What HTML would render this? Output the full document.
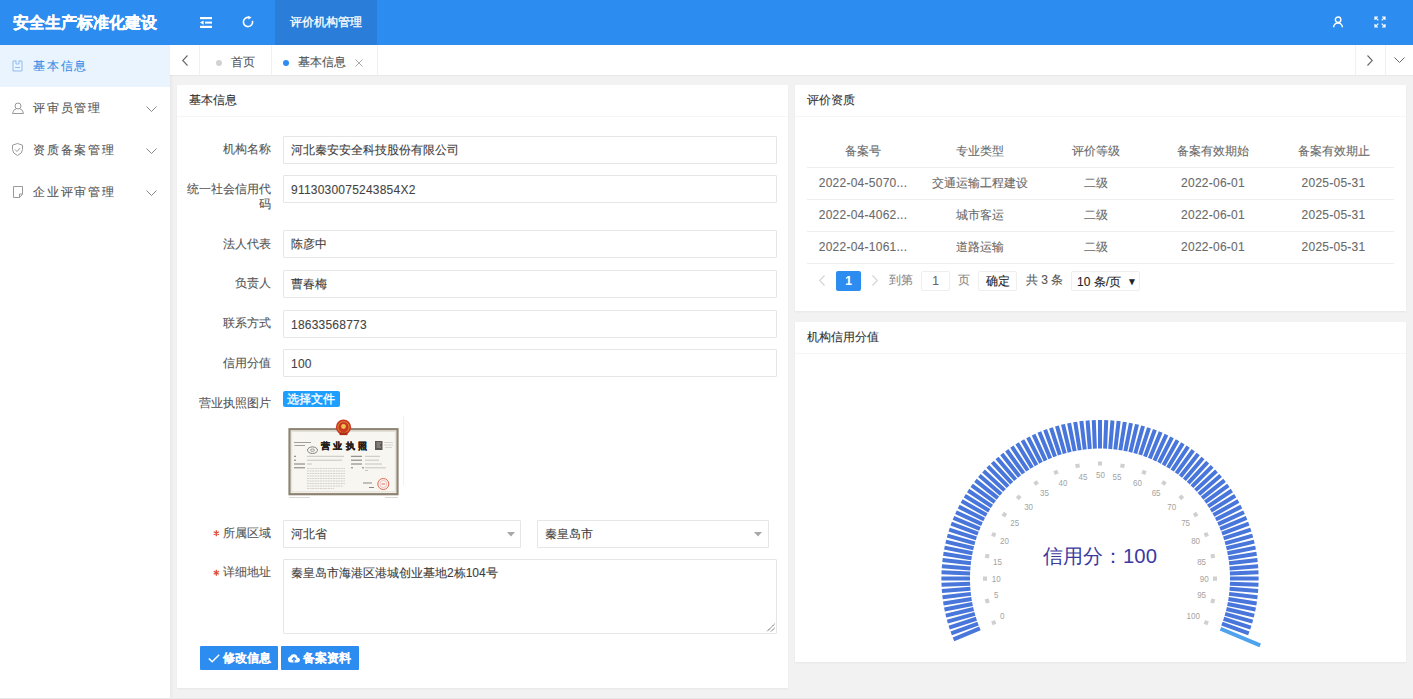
<!DOCTYPE html>
<html><head><meta charset="utf-8">
<style>
*{box-sizing:border-box;margin:0;padding:0}
html,body{width:1413px;height:699px;overflow:hidden;background:#f2f2f2;font-family:"Liberation Sans",sans-serif;font-size:12px;color:#333;-webkit-text-stroke-width:0.1px}
svg text{-webkit-text-stroke-width:0}
.abs{position:absolute}
#hd{left:0;top:0;width:1413px;height:45px;background:#2d8cf0}
#logo{left:13px;top:12px;-webkit-text-stroke:0.3px #fff;font-size:16px;font-weight:bold;color:#fff;line-height:22px;white-space:nowrap}
#navact{left:275px;top:0;width:102px;height:45px;background:#2a7dd8;color:#fff;line-height:44px;-webkit-text-stroke-width:0.3px;text-align:center;font-size:12px}
#side{left:0;top:45px;width:170px;height:653px;background:#fff}
.mi{position:absolute;left:0;width:170px;height:42px;line-height:42px;color:#555;font-size:12px;letter-spacing:1.8px}
.mi .t{position:absolute;left:33px;top:0}
.mi svg{position:absolute}
#tabs{left:170px;top:45px;width:1243px;height:30px;background:#fff;box-shadow:0 1px 1px rgba(0,0,0,.04)}
.sep{position:absolute;top:0;width:1px;height:30px;background:#f1f1f1}
.card{position:absolute;background:#fff;box-shadow:0 1px 2px rgba(0,0,0,.05)}
.ch{position:absolute;left:0;top:0;right:0;height:32px;border-bottom:1px solid #f6f6f6;line-height:30px;padding-left:12px;color:#333}
.lab{position:absolute;width:90px;text-align:right;color:#555;line-height:14px}
.btn{background:#2d8cf0;color:#fff;border-radius:1px;line-height:24px;font-weight:bold}
.td{position:absolute;width:116px;text-align:center;line-height:14px;color:#6a6a6a;white-space:nowrap}
.inp{position:absolute;border:1px solid #e6e6e6;border-radius:1px;background:#fff;line-height:26px;padding-left:7px;color:#3c3c3c}
</style></head><body>
<div id="hd" class="abs">
  <div id="logo" class="abs">安全生产标准化建设</div>
  <svg class="abs" style="left:200px;top:17px" width="13" height="11" viewBox="0 0 13 11">
    <rect x="0" y="0" width="12" height="2.2" fill="#fff"/>
    <rect x="5" y="4.6" width="7" height="2" fill="#fff"/>
    <rect x="0" y="8.8" width="12" height="2.2" fill="#fff"/>
    <path d="M0 5.6 L3.6 3.4 L3.6 7.8 Z" fill="#fff"/>
  </svg>
  <svg class="abs" style="left:242px;top:16px" width="13" height="13" viewBox="0 0 13 13">
    <path d="M10.44 4.81 A4.6 4.6 0 1 1 6.96 1.50" fill="none" stroke="#fff" stroke-width="1.6"/>
    <path d="M6.2 -0.3 L9.6 1.5 L6.4 3.6 Z" fill="#fff"/>
  </svg>
  <div id="navact" class="abs">评价机构管理</div>
  <svg class="abs" style="left:1332px;top:16px" width="12" height="12" viewBox="0 0 12 12">
    <path d="M1.6 11.3 A4.4 4.3 0 0 1 10.4 11.3" fill="none" stroke="#fff" stroke-width="1.5"/>
    <circle cx="6.1" cy="3.7" r="2.75" fill="#2d8cf0" stroke="#fff" stroke-width="1.4"/>
  </svg>
  <svg class="abs" style="left:1374px;top:16px" width="12" height="12" viewBox="0 0 12 12">
    <path d="M1 4 V1 H4 M1 1 L4.3 4.3 M8 1 H11 V4 M11 1 L7.7 4.3 M1 8 V11 H4 M1 11 L4.3 7.7 M8 11 H11 V8 M11 11 L7.7 7.7" fill="none" stroke="#fff" stroke-width="1.15"/>
  </svg>
</div>

<div id="side" class="abs">
  <div class="mi" style="top:0;background:#eaf4fe;color:#3a8ee6"><span class="t">基本信息</span>
    <svg style="left:12px;top:15px" width="11" height="12" viewBox="0 0 11 12"><path d="M1 1 H4 M7 1 H10 V11 H1 V1 M4 0.5 V4 H7 V0.5 M3 7.5 H8" fill="none" stroke="#8fbdf0" stroke-width="1"/></svg>
  </div>
  <div class="mi" style="top:42px"><span class="t">评审员管理</span>
    <svg style="left:12px;top:15px" width="12" height="12" viewBox="0 0 12 12"><circle cx="6" cy="4" r="3" fill="none" stroke="#999" stroke-width="1"/><path d="M0.5 11.5 Q1 7.5 4 6.8 M8 6.8 Q11 7.5 11.5 11.5 H0.5" fill="none" stroke="#999" stroke-width="1"/></svg>
    <svg style="left:146px;top:19px" width="11" height="6" viewBox="0 0 11 6"><path d="M0.5 0.5 L5.5 5.5 L10.5 0.5" fill="none" stroke="#888" stroke-width="1"/></svg>
  </div>
  <div class="mi" style="top:84px"><span class="t">资质备案管理</span>
    <svg style="left:12px;top:14px" width="11" height="13" viewBox="0 0 11 13"><path d="M5.5 0.5 L10.5 2.2 V6.5 Q10.5 10.5 5.5 12.5 Q0.5 10.5 0.5 6.5 V2.2 Z M3 6.5 L5 8.5 L8.2 5" fill="none" stroke="#999" stroke-width="1"/></svg>
    <svg style="left:146px;top:19px" width="11" height="6" viewBox="0 0 11 6"><path d="M0.5 0.5 L5.5 5.5 L10.5 0.5" fill="none" stroke="#888" stroke-width="1"/></svg>
  </div>
  <div class="mi" style="top:126px"><span class="t">企业评审管理</span>
    <svg style="left:13px;top:15px" width="10" height="12" viewBox="0 0 10 12"><path d="M0.5 0.5 H9.5 V8 L6.5 11.5 H0.5 Z M9.5 8 H6.5 V11.5" fill="none" stroke="#999" stroke-width="1"/></svg>
    <svg style="left:146px;top:19px" width="11" height="6" viewBox="0 0 11 6"><path d="M0.5 0.5 L5.5 5.5 L10.5 0.5" fill="none" stroke="#888" stroke-width="1"/></svg>
  </div>
</div>

<div class="abs" style="left:170px;top:45px;width:4px;height:653px;background:linear-gradient(to right,#e9e9e9,#f2f2f2)"></div>
<div id="tabs" class="abs">
  <div class="sep" style="left:29px"></div>
  <div class="sep" style="left:101px"></div>
  <div class="sep" style="left:207px"></div>
  <div class="sep" style="left:1185px"></div>
  <div class="sep" style="left:1215px"></div>
  <svg class="abs" style="left:12px;top:10px" width="6" height="11" viewBox="0 0 6 11"><path d="M5.5 0.5 L0.7 5.5 L5.5 10.5" fill="none" stroke="#666" stroke-width="1.1"/></svg>
  <div class="abs" style="left:46px;top:15px;width:6px;height:6px;border-radius:50%;background:#d2d2d2"></div>
  <div class="abs" style="left:61px;top:2px;line-height:30px;color:#555">首页</div>
  <div class="abs" style="left:113px;top:15px;width:6px;height:6px;border-radius:50%;background:#2d8cf0"></div>
  <div class="abs" style="left:128px;top:2px;line-height:30px;color:#555">基本信息</div>
  <svg class="abs" style="left:185px;top:14px" width="8" height="8" viewBox="0 0 8 8"><path d="M0.5 0.5 L7.5 7.5 M7.5 0.5 L0.5 7.5" stroke="#aaa" stroke-width="1"/></svg>
  <svg class="abs" style="left:1197px;top:10px" width="6" height="11" viewBox="0 0 6 11"><path d="M0.5 0.5 L5.3 5.5 L0.5 10.5" fill="none" stroke="#666" stroke-width="1.1"/></svg>
  <svg class="abs" style="left:1224px;top:12px" width="11" height="6" viewBox="0 0 11 6"><path d="M0.5 0.5 L5.5 5.5 L10.5 0.5" fill="none" stroke="#666" stroke-width="1"/></svg>
</div>

<!-- LEFT CARD -->
<div class="card" style="left:177px;top:85px;width:611px;height:603px">
  <div class="ch">基本信息</div>
</div>


<!-- FORM -->
<div class="lab" style="left:181px;top:142px">机构名称</div>
<div class="inp" style="left:283px;top:136px;width:494px;height:28px">河北秦安安全科技股份有限公司</div>
<div class="lab" style="left:181px;top:182px;line-height:14.5px">统一社会信用代<br>码</div>
<div class="inp" style="left:283px;top:175px;width:494px;height:28px"><span style="letter-spacing:.22px;color:#444;position:relative;top:1px">9113030075243854X2</span></div>
<div class="lab" style="left:181px;top:237px">法人代表</div>
<div class="inp" style="left:283px;top:230px;width:494px;height:28px">陈彦中</div>
<div class="lab" style="left:181px;top:276px">负责人</div>
<div class="inp" style="left:283px;top:270px;width:494px;height:28px">曹春梅</div>
<div class="lab" style="left:181px;top:316px">联系方式</div>
<div class="inp" style="left:283px;top:310px;width:494px;height:28px"><span style="letter-spacing:.22px;color:#444;position:relative;top:1px">18633568773</span></div>
<div class="lab" style="left:181px;top:356px">信用分值</div>
<div class="inp" style="left:283px;top:349px;width:494px;height:28px"><span style="letter-spacing:.22px;color:#444;position:relative;top:1px">100</span></div>
<div class="lab" style="left:181px;top:396px">营业执照图片</div>
<div class="abs" style="left:403px;top:416px;width:1px;height:69px;background:#f1f1f1"></div>
<div class="abs" style="left:283px;top:391px;width:57px;height:16px;background:#1e9fff;border-radius:2px;color:#fff;line-height:16px;text-align:center;text-indent:-2px;font-size:12px;-webkit-text-stroke-width:0.3px">选择文件</div>

<svg class="abs" style="left:284px;top:412px" width="122" height="90" viewBox="0 0 122 90">
  <rect x="5.5" y="17.2" width="108" height="65" fill="#f8f6f1" stroke="#8c8373" stroke-width="2.2"/>
  <rect x="7.8" y="19.5" width="103.4" height="60.4" fill="none" stroke="#d8d2c6" stroke-width="0.6"/>
  <circle cx="59.5" cy="15.2" r="7.6" fill="#c9381f"/>
  <circle cx="59.5" cy="15.2" r="5.6" fill="none" stroke="#e0a040" stroke-width="0.8"/>
  <circle cx="59.5" cy="14.5" r="2.4" fill="#f0c050"/>
  <rect x="55.5" y="20.5" width="8" height="2.6" fill="#b02a18"/>
  <g font-family="Liberation Sans, sans-serif" font-weight="bold" font-size="9" fill="#241c18" stroke="#241c18" stroke-width="0.35">
    <text x="36.8" y="37.3">营</text><text x="49.3" y="37.3">业</text><text x="61.8" y="37.3">执</text><text x="73.6" y="37.3">照</text>
  </g>
  <rect x="91" y="29" width="7.5" height="9" fill="#5d5853"/>
  <path d="M92.5 31 H97 M92.5 33 H96 M92.5 35 H97" stroke="#c8c3bc" stroke-width="0.7"/>
  <path d="M100 30.5 H109 M100 33 H109 M101 35.5 H108" stroke="#c5c0b8" stroke-width="0.6"/>
  <path d="M10 30.5 H27 M10.5 33.5 H21" stroke="#7d7873" stroke-width="0.7"/>
  <ellipse cx="28.5" cy="38.2" rx="5" ry="3.3" fill="none" stroke="#6a6560" stroke-width="0.8"/>
  <ellipse cx="28.5" cy="38.2" rx="2" ry="1.2" fill="none" stroke="#6a6560" stroke-width="0.6"/>
  <g stroke="#6f6a65" stroke-width="0.9">
    <path d="M10 44.3 H12 M10 48.2 H12 M10 52 H21 M10 55.8 H21"/>
    <path d="M67 44.3 H78 M67 48.2 H78 M67 52 H78 M67 55.8 H69 M78 55.8 H80"/>
  </g>
  <g stroke="#a9a49e" stroke-width="0.6">
    <path d="M23 44.3 H60 M23 48.2 H58 M23 52 H28"/>
    <path d="M81 44.3 H96 M81 48.2 H95 M81 52 H98 M81 55.8 H102 M81 58.5 H84"/>
  </g>
  <g stroke="#b9b4ae" stroke-width="0.55">
    <path d="M23 56.5 H61 M23 59 H61 M23 61.5 H61 M23 64 H61 M23 66.5 H61 M23 69 H61 M23 71.5 H61 M23 74 H59 M23 76.5 H50" stroke-dasharray="2 0.6"/>
  </g>
  <circle cx="99.3" cy="72" r="5.5" fill="none" stroke="#e06a5a" stroke-width="1"/>
  <circle cx="99.3" cy="72" r="3.5" fill="none" stroke="#eba098" stroke-width="0.6"/>
  <path d="M97.5 72 H101" stroke="#e06a5a" stroke-width="1"/>
  <path d="M79 71 H88 M85 75.5 H90" stroke="#6f6a65" stroke-width="0.8"/>
  <path d="M5 85.5 H26 M101 85.5 H114" stroke="#cdc9c3" stroke-width="0.7"/>
</svg>
<svg class="abs" style="left:0;top:0" width="1" height="1" overflow="visible"><path d="M216.30 530.20L216.30 536.20M213.70 531.70L218.90 534.70M213.70 534.70L218.90 531.70" stroke="#e04b3a" stroke-width="1.3"/></svg>
<div class="lab" style="left:181px;top:526px">所属区域</div>
<div class="inp" style="left:283px;top:520px;width:238px;height:28px">河北省</div>
<svg class="abs" style="left:506.5px;top:532px" width="8" height="4.5" viewBox="0 0 8 4.5"><path d="M0 0 H8 L4 4.5 Z" fill="#a8a8a8"/></svg>
<div class="inp" style="left:537px;top:520px;width:232px;height:28px">秦皇岛市</div>
<svg class="abs" style="left:753.5px;top:532px" width="8" height="4.5" viewBox="0 0 8 4.5"><path d="M0 0 H8 L4 4.5 Z" fill="#a8a8a8"/></svg>
<svg class="abs" style="left:0;top:0" width="1" height="1" overflow="visible"><path d="M216.30 569.80L216.30 575.80M213.70 571.30L218.90 574.30M213.70 574.30L218.90 571.30" stroke="#e04b3a" stroke-width="1.3"/></svg>
<div class="lab" style="left:181px;top:565px">详细地址</div>
<div class="inp" style="left:283px;top:559px;width:494px;height:75px;line-height:14px;padding-top:6px">秦皇岛市海港区港城创业基地2栋104号</div>
<svg class="abs" style="left:766px;top:623px" width="9" height="9" viewBox="0 0 9 9"><path d="M8.5 1 L1 8.5 M8.5 5 L5 8.5" stroke="#444" stroke-width="1" stroke-dasharray="1.2 0.6"/></svg>
<div class="abs btn" style="left:200px;top:646px;width:78px;height:24px">
  <svg style="position:absolute;left:8px;top:8px" width="12" height="9" viewBox="0 0 12 9"><path d="M0.8 4.5 L4.2 7.8 L11.2 0.8" fill="none" stroke="#fff" stroke-width="1.5"/></svg>
  <span style="position:absolute;left:23px;top:0">修改信息</span></div>
<div class="abs btn" style="left:281px;top:646px;width:78px;height:24px">
  <svg style="position:absolute;left:7px;top:7px" width="12" height="10" viewBox="0 0 12 10"><path d="M3 9.5 H9.5 A2.5 2.5 0 0 0 9.5 4.5 A3.8 3.8 0 0 0 2.2 3.6 A3 3 0 0 0 3 9.5 Z" fill="#fff"/><path d="M6 9.5 V5 M4 6.8 L6 4.6 L8 6.8" fill="none" stroke="#2d8cf0" stroke-width="1.3"/></svg>
  <span style="position:absolute;left:22px;top:0">备案资料</span></div>

<!-- RIGHT CARD 1 -->
<div class="card" style="left:795px;top:85px;width:611px;height:226px">
  <div class="ch">评价资质</div>
</div>


<div class="abs" style="left:807px;top:167px;width:587px;height:1px;background:#eeeeee"></div>
<div class="abs" style="left:807px;top:199px;width:587px;height:1px;background:#eeeeee"></div>
<div class="abs" style="left:807px;top:231px;width:587px;height:1px;background:#eeeeee"></div>
<div class="abs" style="left:807px;top:263px;width:587px;height:1px;background:#eeeeee"></div>
<div class="td" style="left:805px;top:144px">备案号</div>
<div class="td" style="left:922px;top:144px">专业类型</div>
<div class="td" style="left:1038px;top:144px">评价等级</div>
<div class="td" style="left:1155px;top:144px">备案有效期始</div>
<div class="td" style="left:1275.5px;top:144px">备案有效期止</div>
<div class="td" style="left:805px;top:176px;letter-spacing:.25px">2022-04-5070...</div>
<div class="td" style="left:922px;top:176px">交通运输工程建设</div>
<div class="td" style="left:1038px;top:176px">二级</div>
<div class="td" style="left:1155px;top:176px;letter-spacing:.25px">2022-06-01</div>
<div class="td" style="left:1275.5px;top:176px;letter-spacing:.25px">2025-05-31</div>
<div class="td" style="left:805px;top:208px;letter-spacing:.25px">2022-04-4062...</div>
<div class="td" style="left:922px;top:208px">城市客运</div>
<div class="td" style="left:1038px;top:208px">二级</div>
<div class="td" style="left:1155px;top:208px;letter-spacing:.25px">2022-06-01</div>
<div class="td" style="left:1275.5px;top:208px;letter-spacing:.25px">2025-05-31</div>
<div class="td" style="left:805px;top:240px;letter-spacing:.25px">2022-04-1061...</div>
<div class="td" style="left:922px;top:240px">道路运输</div>
<div class="td" style="left:1038px;top:240px">二级</div>
<div class="td" style="left:1155px;top:240px;letter-spacing:.25px">2022-06-01</div>
<div class="td" style="left:1275.5px;top:240px;letter-spacing:.25px">2025-05-31</div>

<svg class="abs" style="left:819px;top:275px" width="6" height="11" viewBox="0 0 6 11"><path d="M5.5 0.5 L0.7 5.5 L5.5 10.5" fill="none" stroke="#d2d2d2" stroke-width="1.1"/></svg>
<div class="abs" style="left:836px;top:271px;width:25px;height:20px;background:#2d8cf0;border-radius:2px;color:#fff;text-align:center;line-height:20px;font-weight:bold">1</div>
<svg class="abs" style="left:872px;top:275px" width="6" height="11" viewBox="0 0 6 11"><path d="M0.5 0.5 L5.3 5.5 L0.5 10.5" fill="none" stroke="#d2d2d2" stroke-width="1.1"/></svg>
<div class="abs" style="left:889px;top:273px;line-height:14px;color:#888">到第</div>
<div class="abs" style="left:921px;top:271px;width:29px;height:20px;border:1px solid #eee;border-radius:2px;text-align:center;line-height:18px;color:#666">1</div>
<div class="abs" style="left:958px;top:273px;line-height:14px;color:#888">页</div>
<div class="abs" style="left:978px;top:271px;width:39px;height:20px;border:1px solid #eee;border-radius:2px;text-align:center;line-height:18px;color:#222">确定</div>
<div class="abs" style="left:1026px;top:273px;line-height:14px;color:#555">共 3 条</div>
<div class="abs" style="left:1071px;top:271px;width:69px;height:20px;border:1px solid #eee;border-radius:2px;line-height:20px;color:#222;padding-left:5px">10 条/页 <span style="position:absolute;left:55px;top:0;font-size:10px">&#9660;</span></div>

<!-- RIGHT CARD 2 -->
<div class="card" style="left:795px;top:322px;width:611px;height:340px">
  <div class="ch">机构信用分值</div>
</div>
<svg class="abs" style="left:795px;top:321px" width="611" height="341" viewBox="0 0 611 341">
<path d="M184.90 307.35L158.47 318.29M183.04 302.60L156.20 312.49M181.36 297.77L154.16 306.61M179.88 292.89L152.35 300.65M178.59 287.95L150.78 294.62M177.50 282.96L149.45 288.54M176.60 277.94L148.35 282.41M175.90 272.88L147.50 276.24M175.40 267.80L146.89 270.04M175.10 262.70L146.52 263.83M175.00 257.60L146.40 257.60M175.10 252.50L146.52 251.37M175.40 247.40L146.89 245.16M175.90 242.32L147.50 238.96M176.60 237.26L148.35 232.79M177.50 232.24L149.45 226.66M178.59 227.25L150.78 220.58M179.88 222.31L152.35 214.55M181.36 217.43L154.16 208.59M183.04 212.60L156.20 202.71M184.90 207.85L158.47 196.91M186.94 203.17L160.97 191.20M189.17 198.58L163.69 185.60M191.58 194.08L166.62 180.10M194.16 189.68L169.77 174.73M196.91 185.38L173.13 169.49M199.83 181.19L176.69 164.38M202.91 177.12L180.45 159.41M206.15 173.17L184.40 154.60M209.54 169.36L188.54 149.94M213.08 165.68L192.85 145.45M216.76 162.14L197.34 141.14M220.57 158.75L202.00 137.00M224.52 155.51L206.81 133.05M228.59 152.43L211.78 129.29M232.78 149.51L216.89 125.73M237.08 146.76L222.13 122.37M241.48 144.18L227.50 119.22M245.98 141.77L233.00 116.29M250.57 139.54L238.60 113.57M255.25 137.50L244.31 111.07M260.00 135.64L250.11 108.80M264.83 133.96L255.99 106.76M269.71 132.48L261.95 104.95M274.65 131.19L267.98 103.38M279.64 130.10L274.06 102.05M284.66 129.20L280.19 100.95M289.72 128.50L286.36 100.10M294.80 128.00L292.56 99.49M299.90 127.70L298.77 99.12M305.00 127.60L305.00 99.00M310.10 127.70L311.23 99.12M315.20 128.00L317.44 99.49M320.28 128.50L323.64 100.10M325.34 129.20L329.81 100.95M330.36 130.10L335.94 102.05M335.35 131.19L342.02 103.38M340.29 132.48L348.05 104.95M345.17 133.96L354.01 106.76M350.00 135.64L359.89 108.80M354.75 137.50L365.69 111.07M359.43 139.54L371.40 113.57M364.02 141.77L377.00 116.29M368.52 144.18L382.50 119.22M372.92 146.76L387.87 122.37M377.22 149.51L393.11 125.73M381.41 152.43L398.22 129.29M385.48 155.51L403.19 133.05M389.43 158.75L408.00 137.00M393.24 162.14L412.66 141.14M396.92 165.68L417.15 145.45M400.46 169.36L421.46 149.94M403.85 173.17L425.60 154.60M407.09 177.12L429.55 159.41M410.17 181.19L433.31 164.38M413.09 185.38L436.87 169.49M415.84 189.68L440.23 174.73M418.42 194.08L443.38 180.10M420.83 198.58L446.31 185.60M423.06 203.17L449.03 191.20M425.10 207.85L451.53 196.91M426.96 212.60L453.80 202.71M428.64 217.43L455.84 208.59M430.12 222.31L457.65 214.55M431.41 227.25L459.22 220.58M432.50 232.24L460.55 226.66M433.40 237.26L461.65 232.79M434.10 242.32L462.50 238.96M434.60 247.40L463.11 245.16M434.90 252.50L463.48 251.37M435.00 257.60L463.60 257.60M434.90 262.70L463.48 263.83M434.60 267.80L463.11 270.04M434.10 272.88L462.50 276.24M433.40 277.94L461.65 282.41M432.50 282.96L460.55 288.54M431.41 287.95L459.22 294.62M430.12 292.89L457.65 300.65M428.64 297.77L455.84 306.61M426.96 302.60L453.80 312.49" stroke="#4876da" stroke-width="4" fill="none"/>
<path d="M425.48 307.75L465.18 324.28" stroke="#4fa3ee" stroke-width="4" fill="none"/>
<path d="M200.60 300.84L196.91 302.37M194.17 279.65L190.25 280.43M192.00 257.60L188.00 257.60M194.17 235.55L190.25 234.77M200.60 214.36L196.91 212.83M211.04 194.82L207.72 192.60M225.10 177.70L222.27 174.87M242.22 163.64L240.00 160.32M261.76 153.20L260.23 149.51M282.95 146.77L282.17 142.85M305.00 144.60L305.00 140.60M327.05 146.77L327.83 142.85M348.24 153.20L349.77 149.51M367.78 163.64L370.00 160.32M384.90 177.70L387.73 174.87M398.96 194.82L402.28 192.60M409.40 214.36L413.09 212.83M415.83 235.55L419.75 234.77M418.00 257.60L422.00 257.60M415.83 279.65L419.75 280.43M409.40 300.84L413.09 302.37" stroke="#d0d0d0" stroke-width="4.2" fill="none"/>
<g font-family="Liberation Sans, sans-serif" font-size="9.6" fill="#a3a3a3"><text x="207.30" y="297.90" text-anchor="middle" textLength="4.5" lengthAdjust="spacingAndGlyphs">0</text><text x="201.30" y="277.20" text-anchor="middle" textLength="4.5" lengthAdjust="spacingAndGlyphs">5</text><text x="201.30" y="261.00" text-anchor="middle" textLength="8.9" lengthAdjust="spacingAndGlyphs">10</text><text x="202.50" y="244.00" text-anchor="middle" textLength="8.9" lengthAdjust="spacingAndGlyphs">15</text><text x="209.40" y="223.10" text-anchor="middle" textLength="8.9" lengthAdjust="spacingAndGlyphs">20</text><text x="219.80" y="205.00" text-anchor="middle" textLength="8.9" lengthAdjust="spacingAndGlyphs">25</text><text x="233.60" y="189.00" text-anchor="middle" textLength="8.9" lengthAdjust="spacingAndGlyphs">30</text><text x="249.40" y="175.10" text-anchor="middle" textLength="8.9" lengthAdjust="spacingAndGlyphs">35</text><text x="268.00" y="165.00" text-anchor="middle" textLength="8.9" lengthAdjust="spacingAndGlyphs">40</text><text x="288.00" y="159.00" text-anchor="middle" textLength="8.9" lengthAdjust="spacingAndGlyphs">45</text><text x="305.50" y="156.80" text-anchor="middle" textLength="8.9" lengthAdjust="spacingAndGlyphs">50</text><text x="321.90" y="159.00" text-anchor="middle" textLength="8.9" lengthAdjust="spacingAndGlyphs">55</text><text x="342.50" y="165.10" text-anchor="middle" textLength="8.9" lengthAdjust="spacingAndGlyphs">60</text><text x="361.10" y="175.10" text-anchor="middle" textLength="8.9" lengthAdjust="spacingAndGlyphs">65</text><text x="376.80" y="189.00" text-anchor="middle" textLength="8.9" lengthAdjust="spacingAndGlyphs">70</text><text x="390.60" y="205.00" text-anchor="middle" textLength="8.9" lengthAdjust="spacingAndGlyphs">75</text><text x="400.60" y="223.30" text-anchor="middle" textLength="8.9" lengthAdjust="spacingAndGlyphs">80</text><text x="406.60" y="243.90" text-anchor="middle" textLength="8.9" lengthAdjust="spacingAndGlyphs">85</text><text x="409.30" y="260.90" text-anchor="middle" textLength="8.9" lengthAdjust="spacingAndGlyphs">90</text><text x="406.60" y="277.40" text-anchor="middle" textLength="8.9" lengthAdjust="spacingAndGlyphs">95</text><text x="398.30" y="297.70" text-anchor="middle" textLength="13.4" lengthAdjust="spacingAndGlyphs">100</text></g>
<text x="305" y="242.3" text-anchor="middle" font-size="20.3" fill="#3c3aa2" font-family="Liberation Sans, sans-serif">信用分：100</text>
</svg>
<div class="abs" style="left:0;top:698px;width:1413px;height:1px;background:#e8e8e8"></div>
</body></html>
